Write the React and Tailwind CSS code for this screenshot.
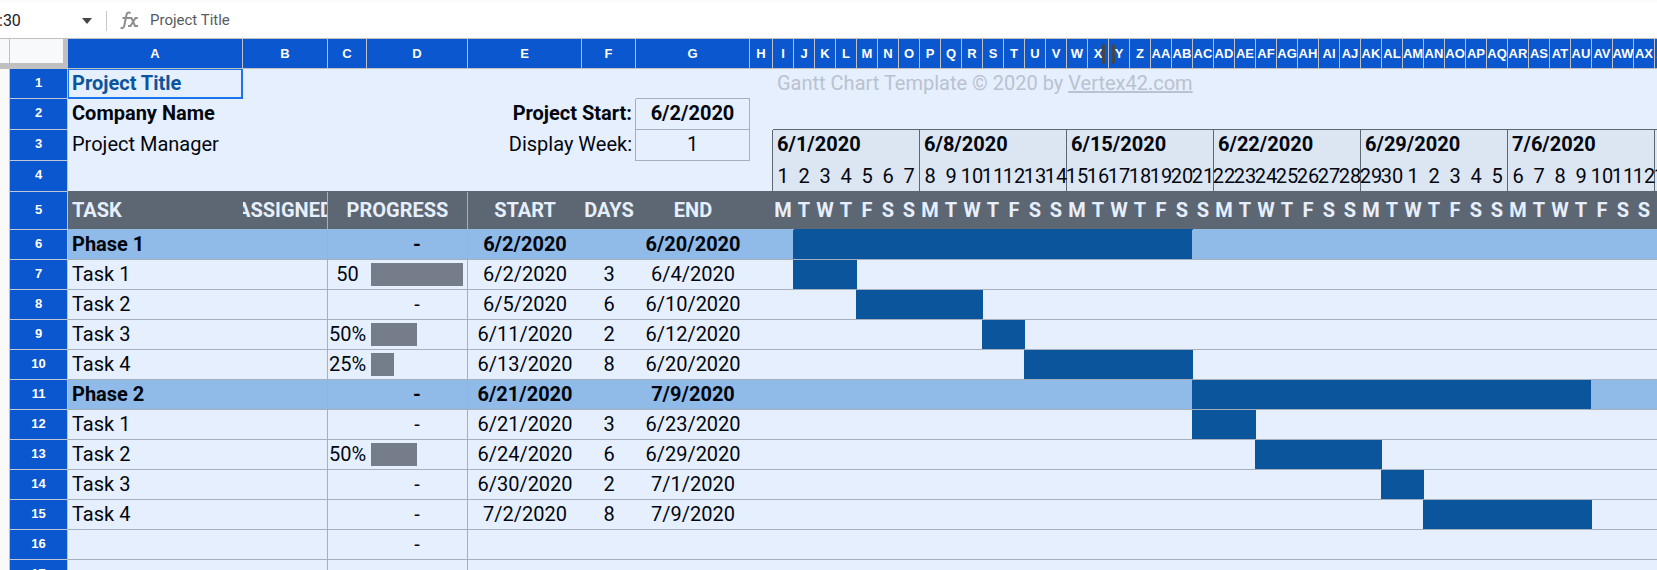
import { clsx } from 'clsx';

const DAY_COUNT = 43;
const DAY_WIDTH = 21;
const LETTERS = ['M', 'T', 'W', 'T', 'F', 'S', 'S'];
const WEEKS = ['6/1/2020', '6/8/2020', '6/15/2020', '6/22/2020', '6/29/2020', '7/6/2020'];
const days = Array.from({ length: DAY_COUNT }, (_, i) => i);

// first / last are day indexes counted from 6/1/2020
const rows = [
  { n: 6, phase: true, task: 'Phase 1', start: '6/2/2020', end: '6/20/2020', first: 1, last: 19 },
  { n: 7, task: 'Task 1', label: '50', bar: 100, start: '6/2/2020', days: 3, end: '6/4/2020', first: 1, last: 3 },
  { n: 8, task: 'Task 2', start: '6/5/2020', days: 6, end: '6/10/2020', first: 4, last: 9 },
  { n: 9, task: 'Task 3', label: '50%', bar: 50, start: '6/11/2020', days: 2, end: '6/12/2020', first: 10, last: 11 },
  { n: 10, task: 'Task 4', label: '25%', bar: 25, start: '6/13/2020', days: 8, end: '6/20/2020', first: 12, last: 19 },
  { n: 11, phase: true, task: 'Phase 2', start: '6/21/2020', end: '7/9/2020', first: 20, last: 38 },
  { n: 12, task: 'Task 1', start: '6/21/2020', days: 3, end: '6/23/2020', first: 20, last: 22 },
  { n: 13, task: 'Task 2', label: '50%', bar: 50, start: '6/24/2020', days: 6, end: '6/29/2020', first: 23, last: 28 },
  { n: 14, task: 'Task 3', start: '6/30/2020', days: 2, end: '7/1/2020', first: 29, last: 30 },
  { n: 15, task: 'Task 4', start: '7/2/2020', days: 8, end: '7/9/2020', first: 31, last: 38 },
  { n: 16, task: '' },
  { n: 17, task: '' },
];

function columnName(i) {
  const letter = String.fromCharCode(65 + (i % 26));
  return i < 26 ? letter : 'A' + letter;
}

// June has 30 days
function dayNumber(d) {
  return (d % 30) + 1;
}

function FormulaBar() {
  return (
    <div className="flex items-center h-[38px] shrink-0 bg-white border-t-[3px] border-[#f9fbfd]">
      <div className="flex items-center justify-between w-[92px] overflow-hidden">
        <span className="-ml-px text-base text-[#202124]">:30</span>
        <button aria-label="Name box menu">
          <svg width="10" height="6" viewBox="0 0 10 6" fill="#444746">
            <path d="M0 0h10L5 6z" />
          </svg>
        </button>
      </div>
      <div className="w-px h-5 ml-[14px] bg-[#c7c7c7]" />
      <svg className="ml-[13px]" width="19" height="19" viewBox="0 0 19 19" fill="none" stroke="#8f8f8f" strokeWidth="2">
        <path d="M10.5 2.2C8 .8 6.700 2 6.300 4.500L4.400 14.300C4 16.600 2.700 17.800.7 16.600M2.500 7h7.500" />
        <path d="M8.500 7h3l3.500 8h3M17.800 7h-2.300l-5 8h-2.500" />
      </svg>
      <input
        aria-label="Formula"
        defaultValue="Project Title"
        className="flex-1 ml-[11px] text-[15px] text-[#575b5f] bg-transparent outline-none"
      />
    </div>
  );
}

function RowHead({ n }) {
  return (
    <>
      <td className="bg-[#f9f9f9] border-r border-[#c0c0c0]" />
      <th
        scope="row"
        className="pb-0.5 bg-[#0b57d0] border-r border-b border-[#c0c8d6] text-white text-[13px] leading-5 font-bold text-center font-['Liberation_Sans',Arial,sans-serif]"
      >
        {n}
      </th>
    </>
  );
}

function ColumnHeads() {
  return (
    <tr className="h-[31px] font-['Liberation_Sans',Arial,sans-serif] text-[13px] leading-5 text-white">
      <td className="bg-[#f8f9fa] border-t border-r border-b-[6px] border-[#c0c0c0]" />
      <td className="bg-[#f8f9fa] border-t border-r-[5px] border-b-[6px] border-[#c0c0c0]" />
      {Array.from({ length: 8 + DAY_COUNT }, (_, i) => (
        <th key={i} scope="col" className="relative bg-[#0b57d0] border border-l-0 border-[#c0c0c0] font-bold">
          <div className="flex justify-center">{columnName(i)}</div>
          {i === 23 && <span className="absolute right-[3px] top-[5px] w-[3px] h-5 rounded-sm bg-[#444746]" />}
          {i === 24 && <span className="absolute left-[3px] top-[5px] w-[3px] h-5 rounded-sm bg-[#444746]" />}
        </th>
      ))}
    </tr>
  );
}

function TaskRow({ row }) {
  const { phase, first, last } = row;
  const cell = clsx('border-b border-[#a6afbc]', phase ? 'bg-[#90bbe8] font-bold' : 'bg-[#e6effe]');
  const text = clsx(cell, 'pb-0.5');

  return (
    <tr className="h-[30px]">
      <RowHead n={row.n} />
      <td className={clsx(text, 'pl-1')}>{row.task}</td>
      <td className={clsx(cell, 'border-r')} />
      <td className={text}>
        <div className="flex justify-center">{row.label}</div>
      </td>
      {row.bar ? (
        <td className={clsx(cell, 'border-r px-1')}>
          <div className="h-[23px] bg-[#757d8b]" style={{ width: `${row.bar}%` }} />
        </td>
      ) : (
        <td className={clsx(text, 'border-r text-center')}>-</td>
      )}
      <td className={clsx(text, 'text-center')}>{row.start}</td>
      <td className={clsx(text, 'text-center')}>{row.days}</td>
      <td className={clsx(text, 'text-center')}>{row.end}</td>
      <td colSpan={DAY_COUNT + 1} className={cell}>
        {last && (
          <div
            className="h-[29px] bg-[#0b559d]"
            style={{
              marginLeft: 22 + first * DAY_WIDTH,
              width: (last - first + 1) * DAY_WIDTH + (phase ? 0 : 1),
            }}
          />
        )}
      </td>
    </tr>
  );
}

function Sheet() {
  const phaseLine = 'border-b border-b-[#90bbe8]';

  return (
    <table className="table-fixed w-[1676px] border-separate border-spacing-0 text-xl leading-6 whitespace-nowrap text-[#02060e] bg-[#e6effe]">
      <colgroup>
        <col className="w-[10px]" />
        <col className="w-[58px]" />
        <col className="w-[175px]" />
        <col className="w-[85px]" />
        <col className="w-[39px]" />
        <col className="w-[101px]" />
        <col className="w-[114px]" />
        <col className="w-[54px]" />
        <col className="w-[114px]" />
        <col className="w-[23px]" />
        {days.map((d) => (
          <col key={d} className="w-[21px]" />
        ))}
      </colgroup>
      <thead>
        <ColumnHeads />
      </thead>
      <tbody>
        <tr className="h-[30px]">
          <RowHead n={1} />
          <td className="pl-[3px] pb-px border border-r-2 border-b-2 border-[#1a73e8] font-bold text-[#0b559d]">Project Title</td>
          <td colSpan={5} />
          <td className="border-b border-[#a6afbc]" />
          <td />
          <td colSpan={DAY_COUNT} className="pl-1 pb-0.5 text-[#b9c2cf]">
            Gantt Chart Template © 2020 by <a href="#vertex42" className="underline">Vertex42.com</a>
          </td>
        </tr>
        <tr className="h-[31px]">
          <RowHead n={2} />
          <td className="pl-1 pb-[3px] font-bold">Company Name</td>
          <td colSpan={3} />
          <td colSpan={2} className="pr-[3px] pb-[3px] border-r border-[#a6afbc] font-bold text-right">Project Start:</td>
          <td className="pb-[3px] border-r border-b border-[#a6afbc] font-bold text-center">6/2/2020</td>
          <td />
          <td colSpan={DAY_COUNT} className="border-b border-[#5d6673]" />
        </tr>
        <tr className="h-[31px]">
          <RowHead n={3} />
          <td className="pl-1 pb-[3px]">Project Manager</td>
          <td colSpan={3} />
          <td colSpan={2} className="pr-[3px] pb-[3px] border-r border-[#a6afbc] text-right">Display Week:</td>
          <td className="pb-[3px] border-r border-b border-[#a6afbc] text-center">1</td>
          <td className="border-r border-[#5d6673]" />
          {WEEKS.map((w) => (
            <td key={w} colSpan={7} className="pl-1 pb-[3px] border-r border-[#5d6673] bg-[#dce5f2] font-bold">{w}</td>
          ))}
          <td className="bg-[#dce5f2]" />
        </tr>
        <tr className="h-[31px]">
          <RowHead n={4} />
          <td colSpan={7} className="border-b border-[#5d6673]" />
          <td className="border-r border-b border-[#5d6673]" />
          {days.map((d) => (
            <td
              key={d}
              className={clsx('pb-px border-b border-[#5d6673] bg-[#dce5f2]', d % 7 === 6 ? 'border-r' : 'pr-px')}
            >
              <div className="flex justify-center">{dayNumber(d)}</div>
            </td>
          ))}
        </tr>
        <tr className="h-[38px] bg-[#5d6673] text-[#e6effe] font-bold">
          <RowHead n={5} />
          <td className={clsx(phaseLine, 'pl-1 pb-0.5')}>TASK</td>
          <td className={clsx(phaseLine, 'pb-0.5 border-r border-r-[#a6afbc]')}>
            <div className="flex justify-center overflow-hidden">ASSIGNED</div>
          </td>
          <td colSpan={2} className={clsx(phaseLine, 'pb-0.5 border-r border-r-[#a6afbc] text-center')}>PROGRESS</td>
          <td className={clsx(phaseLine, 'pb-0.5 text-center')}>START</td>
          <td className={clsx(phaseLine, 'pb-0.5 text-center')}>DAYS</td>
          <td className={clsx(phaseLine, 'pb-0.5 text-center')}>END</td>
          <td className={phaseLine} />
          {days.map((d) => (
            <td
              key={d}
              className={clsx('pb-0.5 pr-px border-b', d >= 1 && d <= 19 ? 'border-[#0b559d]' : 'border-[#90bbe8]')}
            >
              <div className="flex justify-center">{LETTERS[d % 7]}</div>
            </td>
          ))}
        </tr>
        {rows.map((row) => (
          <TaskRow key={row.n} row={row} />
        ))}
      </tbody>
    </table>
  );
}

export default function App() {
  return (
    <div className="flex flex-col h-screen overflow-hidden bg-white font-[Roboto,sans-serif]">
      <FormulaBar />
      <div className="flex-1 min-h-0 overflow-hidden">
        <Sheet />
      </div>
    </div>
  );
}
